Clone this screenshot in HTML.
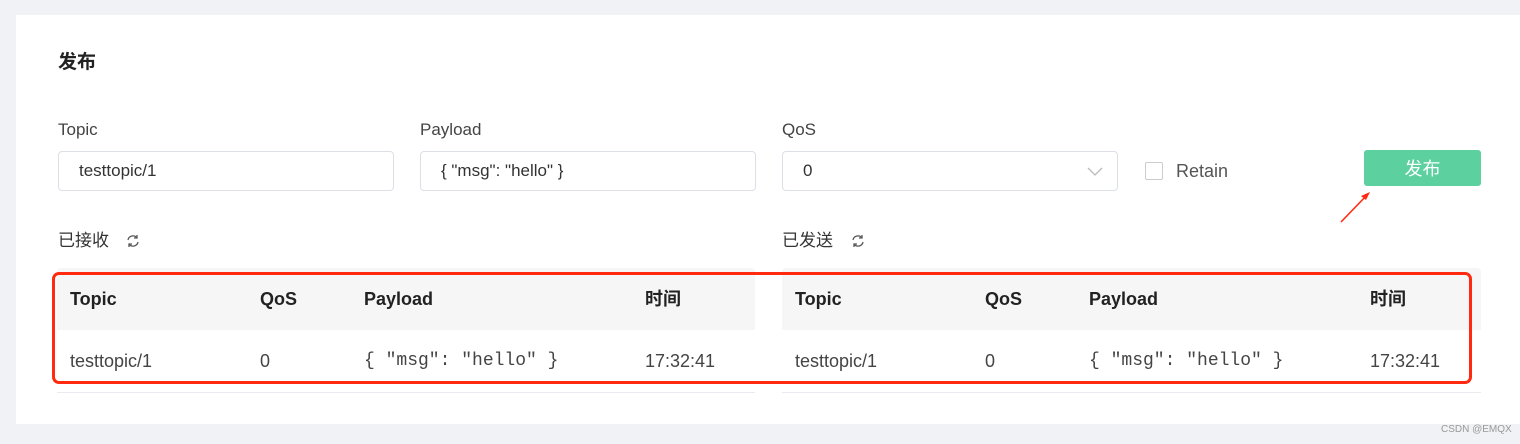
<!DOCTYPE html>
<html><head><meta charset="utf-8"><style>
*{box-sizing:border-box;margin:0;padding:0}
body{width:1520px;height:444px;background:#f0f2f5;font-family:"Liberation Sans","Noto Sans CJK SC",sans-serif;position:relative;overflow:hidden;color:#333}
.card{position:absolute;left:16px;top:15px;width:1504px;height:409px;background:#fff}
.a{position:absolute;white-space:nowrap;line-height:20px}
.lbl{font-size:17px;color:#444}
.inp{position:absolute;top:151px;height:40px;border:1px solid #dcdfe6;border-radius:4px;font-size:17px;color:#333;padding:0 0 0 20px;line-height:38px}
.th{position:absolute;height:62px;top:268px;background:#f6f6f7;border-radius:4px 4px 0 0}
.row{position:absolute;top:330px;height:63px;border-bottom:1px solid #e8eaf0}
.h{font-size:18px;font-weight:bold;color:#222;top:289px}
.c{font-size:18px;color:#444;top:351px}
.m{font-family:"Liberation Mono","DejaVu Sans Mono",monospace;font-size:18px;color:#444;top:351px}
</style></head><body>
<div class="card"></div>
<div class="a" style="left:58px;top:53px;font-size:19px;font-weight:bold;color:#222">发布</div>
<div class="a lbl" style="left:58px;top:120px">Topic</div>
<div class="a lbl" style="left:420px;top:120px">Payload</div>
<div class="a lbl" style="left:782px;top:120px">QoS</div>
<div class="inp" style="left:58px;width:336px">testtopic/1</div>
<div class="inp" style="left:420px;width:336px">{ "msg": "hello" }</div>
<div class="inp" style="left:782px;width:336px">0
<svg style="position:absolute;right:14px;top:15px" width="16" height="10" viewBox="0 0 16 10"><path d="M1 1l7 7 7-7" fill="none" stroke="#bbb" stroke-width="1.3"/></svg></div>
<div class="a" style="left:1145px;top:162px;width:18px;height:18px;border:1px solid #ccc;border-radius:2px"></div>
<div class="a" style="left:1176px;top:161px;font-size:18px;color:#555">Retain</div>
<div class="a" style="left:1364px;top:150px;width:117px;height:36px;background:#5dd0a0;border-radius:3px;color:#fff;font-size:18px;text-align:center;line-height:38px">发布</div>
<svg class="a" style="left:1336px;top:186px" width="40" height="40"><path d="M5 36L32 8" stroke="#ff2a10" stroke-width="1.6"/><path d="M34 6l-9 4 5 4z" fill="#ff2a10"/></svg>
<div class="a" style="left:58px;top:231px;font-size:17px;color:#333">已接收</div>
<div class="a" style="left:782px;top:231px;font-size:17px;color:#333">已发送</div>
<svg class="a" style="left:126px;top:234px" width="14" height="14" viewBox="0 0 14 14"><path d="M2 6a5 5 0 0 1 9-2M12 8a5 5 0 0 1-9 2" fill="none" stroke="#555" stroke-width="1.3"/><path d="M11 1v3H8M3 13v-3h3" fill="none" stroke="#555" stroke-width="1.3"/></svg>
<svg class="a" style="left:851px;top:234px" width="14" height="14" viewBox="0 0 14 14"><path d="M2 6a5 5 0 0 1 9-2M12 8a5 5 0 0 1-9 2" fill="none" stroke="#555" stroke-width="1.3"/><path d="M11 1v3H8M3 13v-3h3" fill="none" stroke="#555" stroke-width="1.3"/></svg>
<div class="th" style="left:57px;width:698px"></div>
<div class="th" style="left:782px;width:699px"></div>
<div class="row" style="left:57px;width:698px"></div>
<div class="row" style="left:782px;width:699px"></div>
<div class="a h" style="left:70px">Topic</div><div class="a h" style="left:260px">QoS</div><div class="a h" style="left:364px">Payload</div><div class="a h" style="left:645px">时间</div>
<div class="a h" style="left:795px">Topic</div><div class="a h" style="left:985px">QoS</div><div class="a h" style="left:1089px">Payload</div><div class="a h" style="left:1370px">时间</div>
<div class="a c" style="left:70px">testtopic/1</div><div class="a c" style="left:260px">0</div><div class="a m" style="left:364px">{ "msg": "hello" }</div><div class="a c" style="left:645px">17:32:41</div>
<div class="a c" style="left:795px">testtopic/1</div><div class="a c" style="left:985px">0</div><div class="a m" style="left:1089px">{ "msg": "hello" }</div><div class="a c" style="left:1370px">17:32:41</div>
<div class="a" style="left:52px;top:272px;width:1420px;height:112px;border:3px solid #ff2a10;border-radius:7px"></div>
<div class="a" style="left:1441px;top:420px;font-size:10px;color:#999">CSDN @EMQX</div>
</body></html>
